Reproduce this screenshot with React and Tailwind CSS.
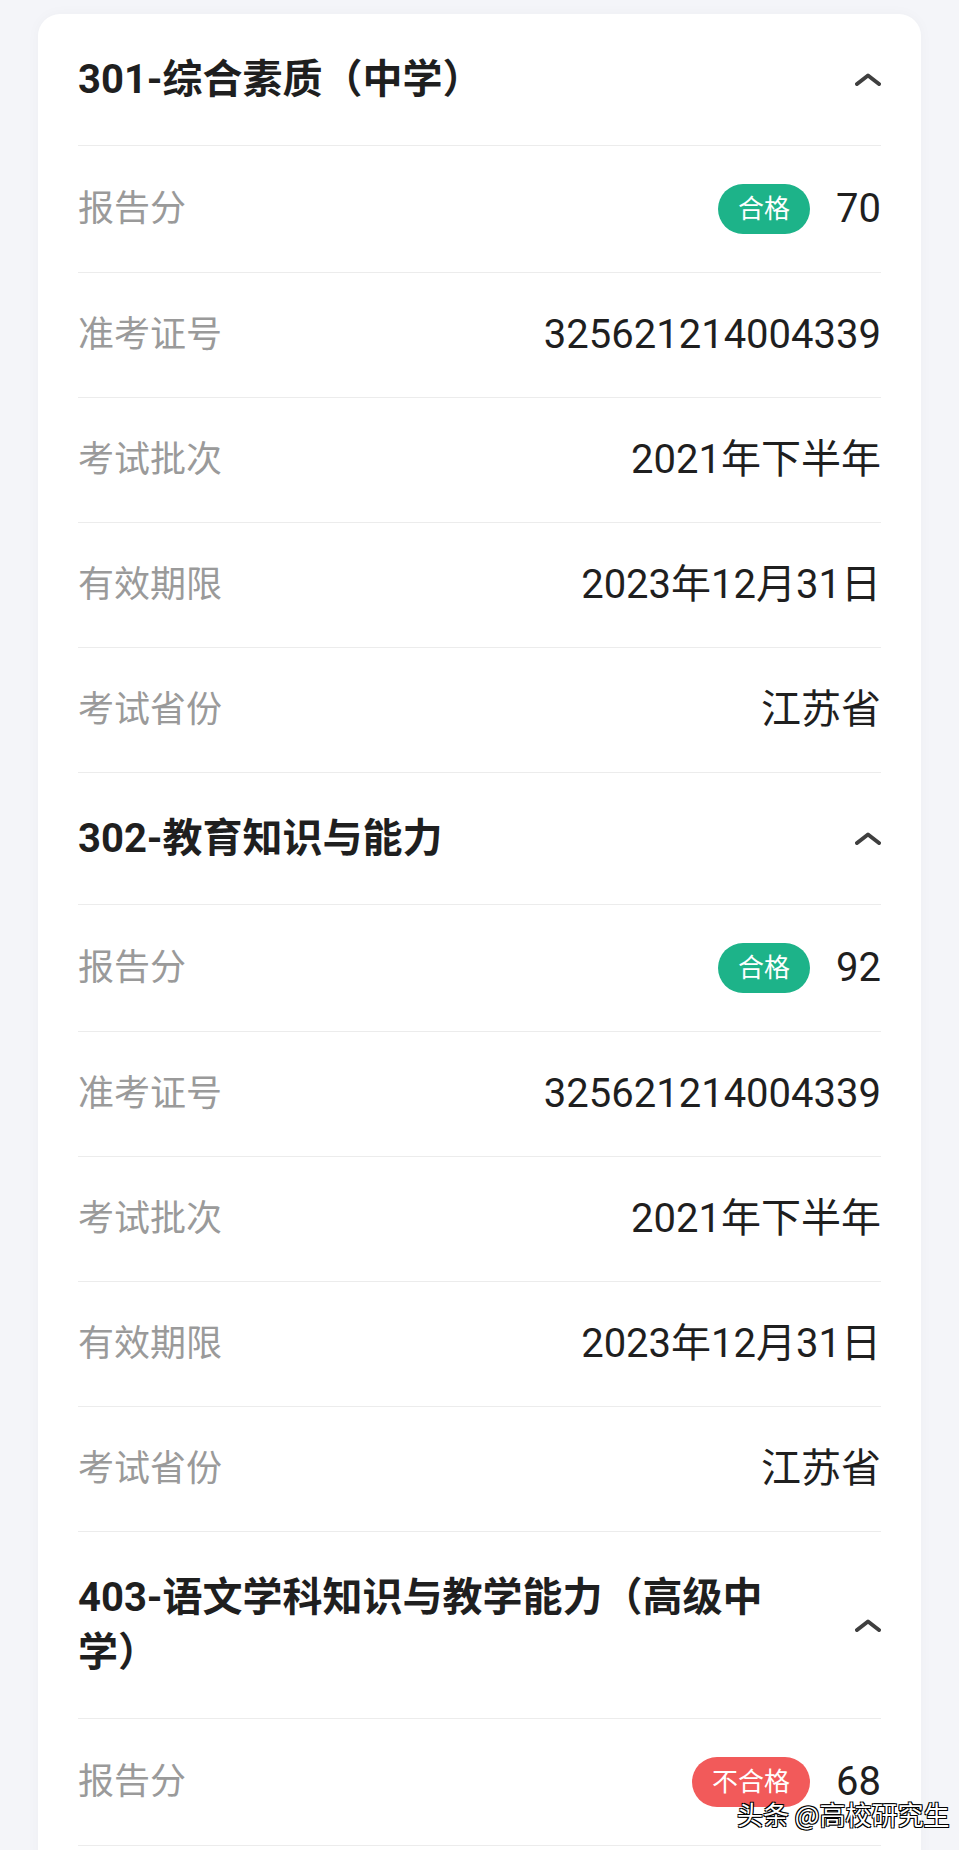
import React from 'react';

const subjects = [
    {
        title: '301-综合素质（中学）',
        score: '70',
        pass: true,
    },
    {
        title: '302-教育知识与能力',
        score: '92',
        pass: true,
    },
    {
        title: '403-语文学科知识与教学能力（高级中学）',
        score: '68',
        pass: false,
        tall: true,
    },
];

const details = [
    ['准考证号', '325621214004339'],
    ['考试批次', '2021年下半年'],
    ['有效期限', '2023年12月31日'],
    ['考试省份', '江苏省'],
];

const ChevronUp = () => (
    <svg width="26" height="13" viewBox="0 0 26 13" fill="none" className="shrink-0">
        <path d="M2 11 L13 2.5 L24 11" stroke="#3f3f3f" strokeWidth="4" strokeLinecap="round" strokeLinejoin="round" />
    </svg>
);

const Badge = ({ pass }) => (
    <span
        className={`h-[50px] px-[20px] rounded-full flex items-center text-[26px] leading-none text-white ${
            pass ? 'bg-[#1db389]' : 'bg-[#f25a5a]'
        }`}
    >
        {pass ? '合格' : '不合格'}
    </span>
);

const Subject = ({ subject }) => (
    <div>
        {/* Header */}
        <div
            className={`flex items-center justify-between border-b border-[#ececec] ${
                subject.tall ? 'h-[187px]' : 'h-[132px]'
            }`}
        >
            <h2 className="flex-1 min-w-0 pr-[78px] text-[40px] leading-[55px] font-bold text-[#1f1f1f]">
                {subject.title}
            </h2>
            <ChevronUp />
        </div>

        {/* Score row */}
        <div className="h-[127px] flex items-center justify-between border-b border-[#ececec]">
            <span className="text-[36px] text-[#9a9a9a]">报告分</span>
            <div className="flex items-center gap-[26px]">
                <Badge pass={subject.pass} />
                <span className="text-[40px] leading-[50px] text-[#1f1f1f]">{subject.score}</span>
            </div>
        </div>

        {details.map(([label, value]) => (
            <div key={label} className="h-[125px] flex items-center justify-between border-b border-[#ececec]">
                <span className="text-[36px] text-[#9a9a9a]">{label}</span>
                <span className="text-[40px] leading-[50px] text-[#1f1f1f]">{value}</span>
            </div>
        ))}
    </div>
);

export default function App() {
    return (
        <div className="min-h-screen relative bg-[#f4f5f9] pt-[14px] px-[38px] font-['Roboto','Noto_Sans_CJK_SC',sans-serif]">
            <div className="bg-white rounded-[22px] px-[40px] shadow-[0_0_14px_rgba(0,0,0,0.03)]">
                {subjects.map((s) => (
                    <Subject key={s.title} subject={s} />
                ))}
            </div>

            {/* Watermark */}
            <div className="absolute left-[737px] top-[1797px] text-[26px] leading-[34px] text-white font-['Noto_Sans_CJK_SC',sans-serif] [text-shadow:1px_1px_0_#000,-1px_-1px_0_#000,1px_-1px_0_#000,-1px_1px_0_#000]">
                头条 @高校研究生
            </div>
        </div>
    );
}
